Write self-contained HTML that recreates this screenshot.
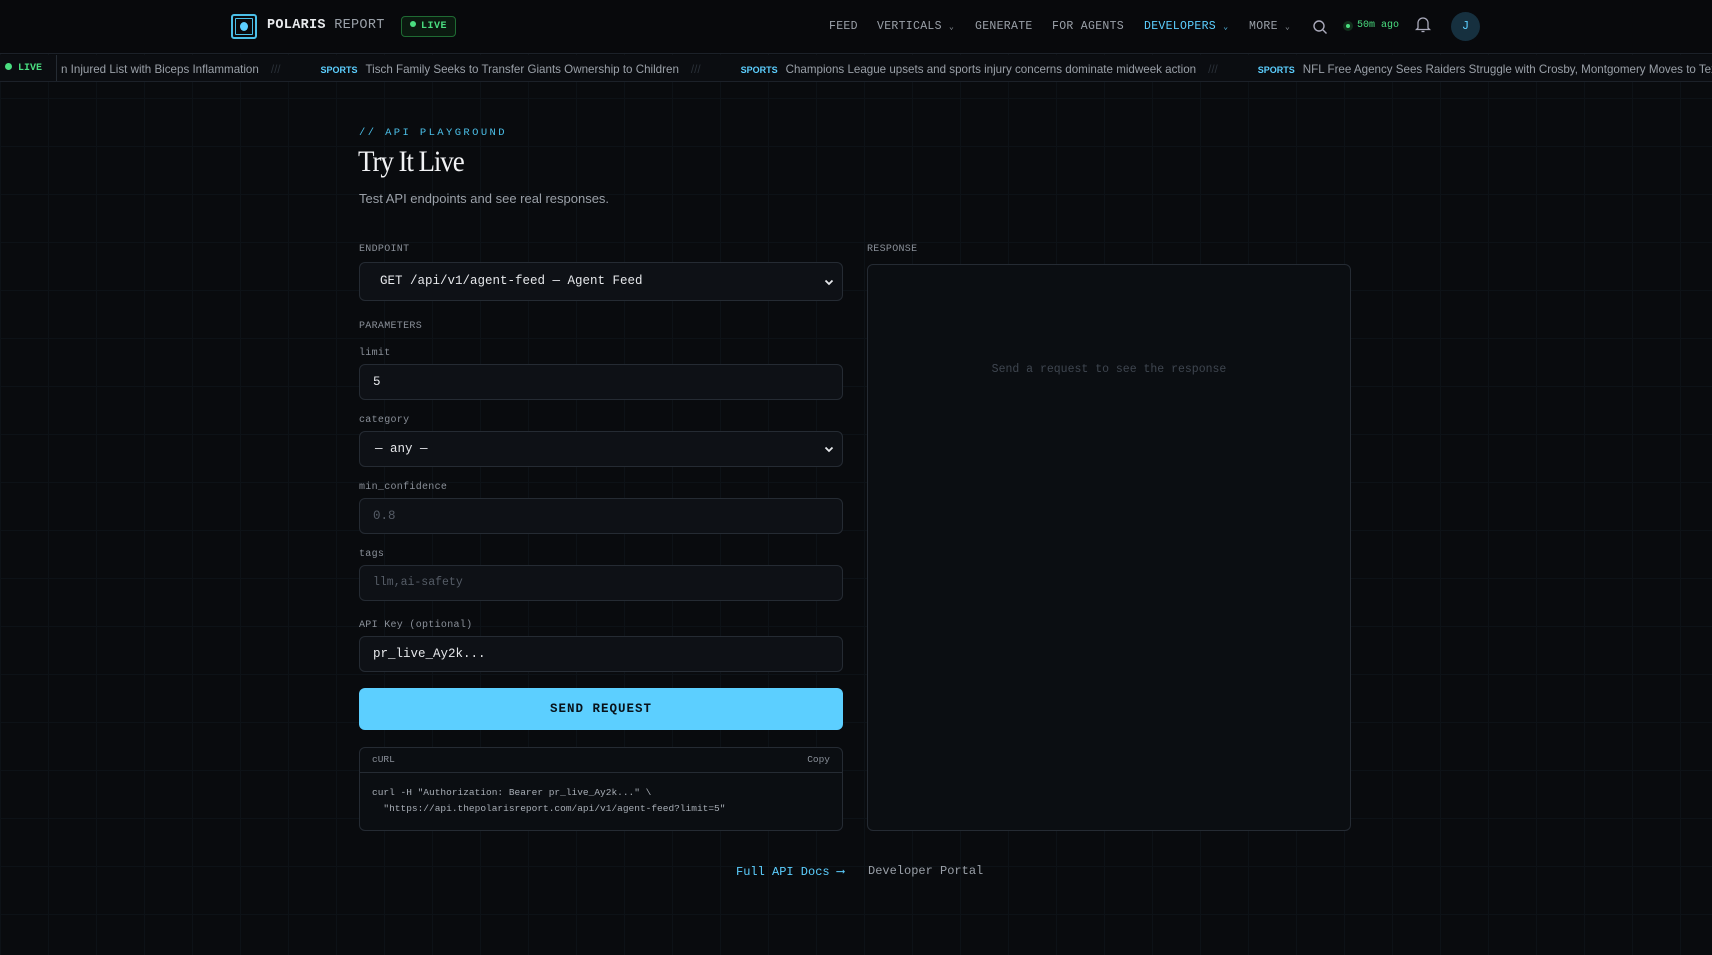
<!DOCTYPE html>
<html><head><meta charset="utf-8"><style>
*{box-sizing:border-box;margin:0;padding:0}
body{width:1712px;height:955px;overflow:hidden;background:#090b0e;color:#e6e8eb;font-family:"Liberation Mono",monospace;position:relative;
background-image:linear-gradient(#0d1217 1px,transparent 1px),linear-gradient(90deg,#0d1217 1px,transparent 1px);background-size:48px 48px;background-position:0 2px}
.abs{position:absolute}
nav{position:absolute;left:0;top:0;width:1712px;height:54px;background:#08090c;border-bottom:1px solid #1c2129}
.ticker{position:absolute;left:0;top:55px;width:1712px;height:27px;background:#0b0d11;border-bottom:1px solid #1c2129;font-family:"Liberation Sans",sans-serif;font-size:11.6px;color:#9aa0a8;white-space:nowrap;overflow:hidden}
.nl{position:absolute;top:20px;font-size:11.5px;letter-spacing:.3px;color:#9aa0a8}
.lab{position:absolute;left:359px;font-size:10px;color:#8a9099;letter-spacing:.3px}
.inp{position:absolute;left:359px;width:484px;height:36px;background:#0e1116;border:1px solid #252b33;border-radius:6px;font-size:12.5px;color:#e6e8eb;padding-left:13px;line-height:34px}
.sp{color:#5ccfff;font-weight:bold;font-size:9px;margin-right:8px}
.sep{color:#2a3038;margin:0 40px 0 12px}
.chev{position:absolute;right:8px;top:50%;margin-top:-5px}
</style></head><body>
<nav>
 <div class="abs" style="left:231px;top:14px;width:26px;height:25px;border:2px solid #4bbfe8;border-radius:3px"></div>
 <div class="abs" style="left:235px;top:18px;width:18px;height:17px;border:1.5px solid #4bbfe8;border-radius:1px"></div>
 <div class="abs" style="left:240px;top:22px;width:8px;height:9px;background:#5ccfff;border-radius:50%"></div>
 <div class="abs" style="left:267px;top:18px;font-size:13.5px;font-weight:bold;letter-spacing:.3px;color:#e8eaed">POLARIS <span style="font-weight:normal;color:#9aa0a8">REPORT</span></div>
 <div class="abs" style="left:401px;top:16px;width:55px;height:21px;border:1px solid #1f6b33;background:#0b1a10;border-radius:4px;font-size:10px;font-weight:bold;color:#4ade80;line-height:19px;padding-left:8px;letter-spacing:.5px"><span style="display:inline-block;width:6px;height:6px;border-radius:50%;background:#4ade80;margin-right:5px;vertical-align:1px"></span>LIVE</div>
 <div class="nl" style="left:829px">FEED</div>
 <div class="nl" style="left:877px">VERTICALS <span style="font-size:8px">&#8964;</span></div>
 <div class="nl" style="left:975px">GENERATE</div>
 <div class="nl" style="left:1052px">FOR AGENTS</div>
 <div class="nl" style="left:1144px;color:#5ccfff">DEVELOPERS <span style="font-size:8px">&#8964;</span></div>
 <div class="nl" style="left:1249px">MORE <span style="font-size:8px">&#8964;</span></div>
 <svg class="abs" style="left:1312px;top:19px" width="16" height="16" viewBox="0 0 16 16"><circle cx="7" cy="7" r="5" fill="none" stroke="#aab" stroke-width="1.4"/><path d="M11 11l3.5 3.5" stroke="#aab" stroke-width="1.4"/></svg>
 <div class="abs" style="left:1343px;top:21px;width:10px;height:10px;border-radius:50%;background:#12301c"></div>
 <div class="abs" style="left:1346px;top:24px;width:4px;height:4px;border-radius:50%;background:#4ade80"></div>
 <div class="abs" style="left:1357px;top:20px;font-size:10px;color:#4ade80">50m ago</div>
 <svg class="abs" style="left:1415px;top:15px" width="16" height="19" viewBox="0 0 16 19"><path d="M3 13V8a5 5 0 0 1 10 0v5l1.5 1.5h-13z" fill="none" stroke="#aab" stroke-width="1.3"/><path d="M6.5 16.5h3" stroke="#aab" stroke-width="1.3"/></svg>
 <div class="abs" style="left:1451px;top:12px;width:29px;height:29px;border-radius:50%;background:#16303f;color:#5ccfff;font-size:12px;text-align:center;line-height:29px">J</div>
</nav>
<div class="ticker">
 <div class="abs" style="left:0;top:0;width:57px;height:27px;border-right:1px solid #252b33;background:#0b0d11;z-index:2;font-family:'Liberation Mono',monospace;font-size:10px;font-weight:bold;color:#4ade80;line-height:27px;padding-left:5px"><span style="display:inline-block;width:7px;height:7px;border-radius:50%;background:#4ade80;margin-right:6px"></span>LIVE</div>
 <div class="abs" style="left:61px;top:8px">n Injured List with Biceps Inflammation<span class="sep">///</span><span class="sp">SPORTS</span>Tisch Family Seeks to Transfer Giants Ownership to Children<span class="sep">///</span><span class="sp">SPORTS</span>Champions League upsets and sports injury concerns dominate midweek action<span class="sep">///</span><span class="sp">SPORTS</span>NFL Free Agency Sees Raiders Struggle with Crosby, Montgomery Moves to Texans</div>
</div>

<div class="abs" style="left:359px;top:127px;font-size:10.5px;letter-spacing:2.4px;color:#4bbfe8">// API PLAYGROUND</div>
<div class="abs" style="left:358px;top:145px;font-family:'Liberation Serif',serif;font-size:30px;color:#f2f3f5;letter-spacing:-1.2px;transform:scaleX(.9);transform-origin:left">Try It Live</div>
<div class="abs" style="left:359px;top:191px;font-family:'Liberation Sans',sans-serif;font-size:13px;color:#9aa0a8">Test API endpoints and see real responses.</div>

<div class="lab" style="top:244px">ENDPOINT</div>
<div class="inp" style="top:262px;height:39px;line-height:37px;padding-left:20px;font-size:12.5px">GET /api/v1/agent-feed — Agent Feed<svg class="chev" width="10" height="10" viewBox="0 0 10 10"><path d="M1.5 3.5L5 7l3.5-3.5" fill="none" stroke="#e6e8eb" stroke-width="1.8"/></svg></div>
<div class="lab" style="top:321px">PARAMETERS</div>
<div class="lab" style="top:348px">limit</div>
<div class="inp" style="top:364px">5</div>
<div class="lab" style="top:415px">category</div>
<div class="inp" style="top:431px;padding-left:15px">— any —<svg class="chev" width="10" height="10" viewBox="0 0 10 10"><path d="M1.5 3.5L5 7l3.5-3.5" fill="none" stroke="#e6e8eb" stroke-width="1.8"/></svg></div>
<div class="lab" style="top:482px">min_confidence</div>
<div class="inp" style="top:498px;color:#555c66">0.8</div>
<div class="lab" style="top:549px">tags</div>
<div class="inp" style="top:565px;color:#555c66;font-size:11.5px">llm,ai-safety</div>
<div class="lab" style="top:620px">API Key (optional)</div>
<div class="inp" style="top:636px">pr_live_Ay2k...</div>
<div class="abs" style="left:359px;top:688px;width:484px;height:42px;background:#5ccfff;border-radius:6px;color:#08121a;font-weight:bold;font-size:12.5px;letter-spacing:1px;text-align:center;line-height:42px">SEND REQUEST</div>
<div class="abs" style="left:359px;top:747px;width:484px;height:84px;border:1px solid #252b33;border-radius:6px;background:#0b0e12">
 <div style="height:25px;border-bottom:1px solid #252b33;font-size:9.5px;color:#8a9099;padding:0 12px;line-height:24px">cURL<span style="float:right">Copy</span></div>
 <div style="font-size:9.5px;color:#a8aeb6;padding:12px 12px;line-height:16px;white-space:pre">curl -H "Authorization: Bearer pr_live_Ay2k..." \
  "https://api.thepolarisreport.com/api/v1/agent-feed?limit=5"</div>
</div>

<div class="lab" style="left:867px;top:244px">RESPONSE</div>
<div class="abs" style="left:867px;top:264px;width:484px;height:567px;border:1px solid #252b33;border-radius:6px;background:#0b0e12">
 <div style="position:absolute;top:98px;width:100%;text-align:center;font-size:11.5px;color:#3f4650">Send a request to see the response</div>
</div>

<div class="abs" style="left:736px;top:864px;font-size:12px;color:#5ccfff">Full API Docs ⟶</div>
<div class="abs" style="left:868px;top:864px;font-size:12px;color:#9aa0a8">Developer Portal</div>
</body></html>
